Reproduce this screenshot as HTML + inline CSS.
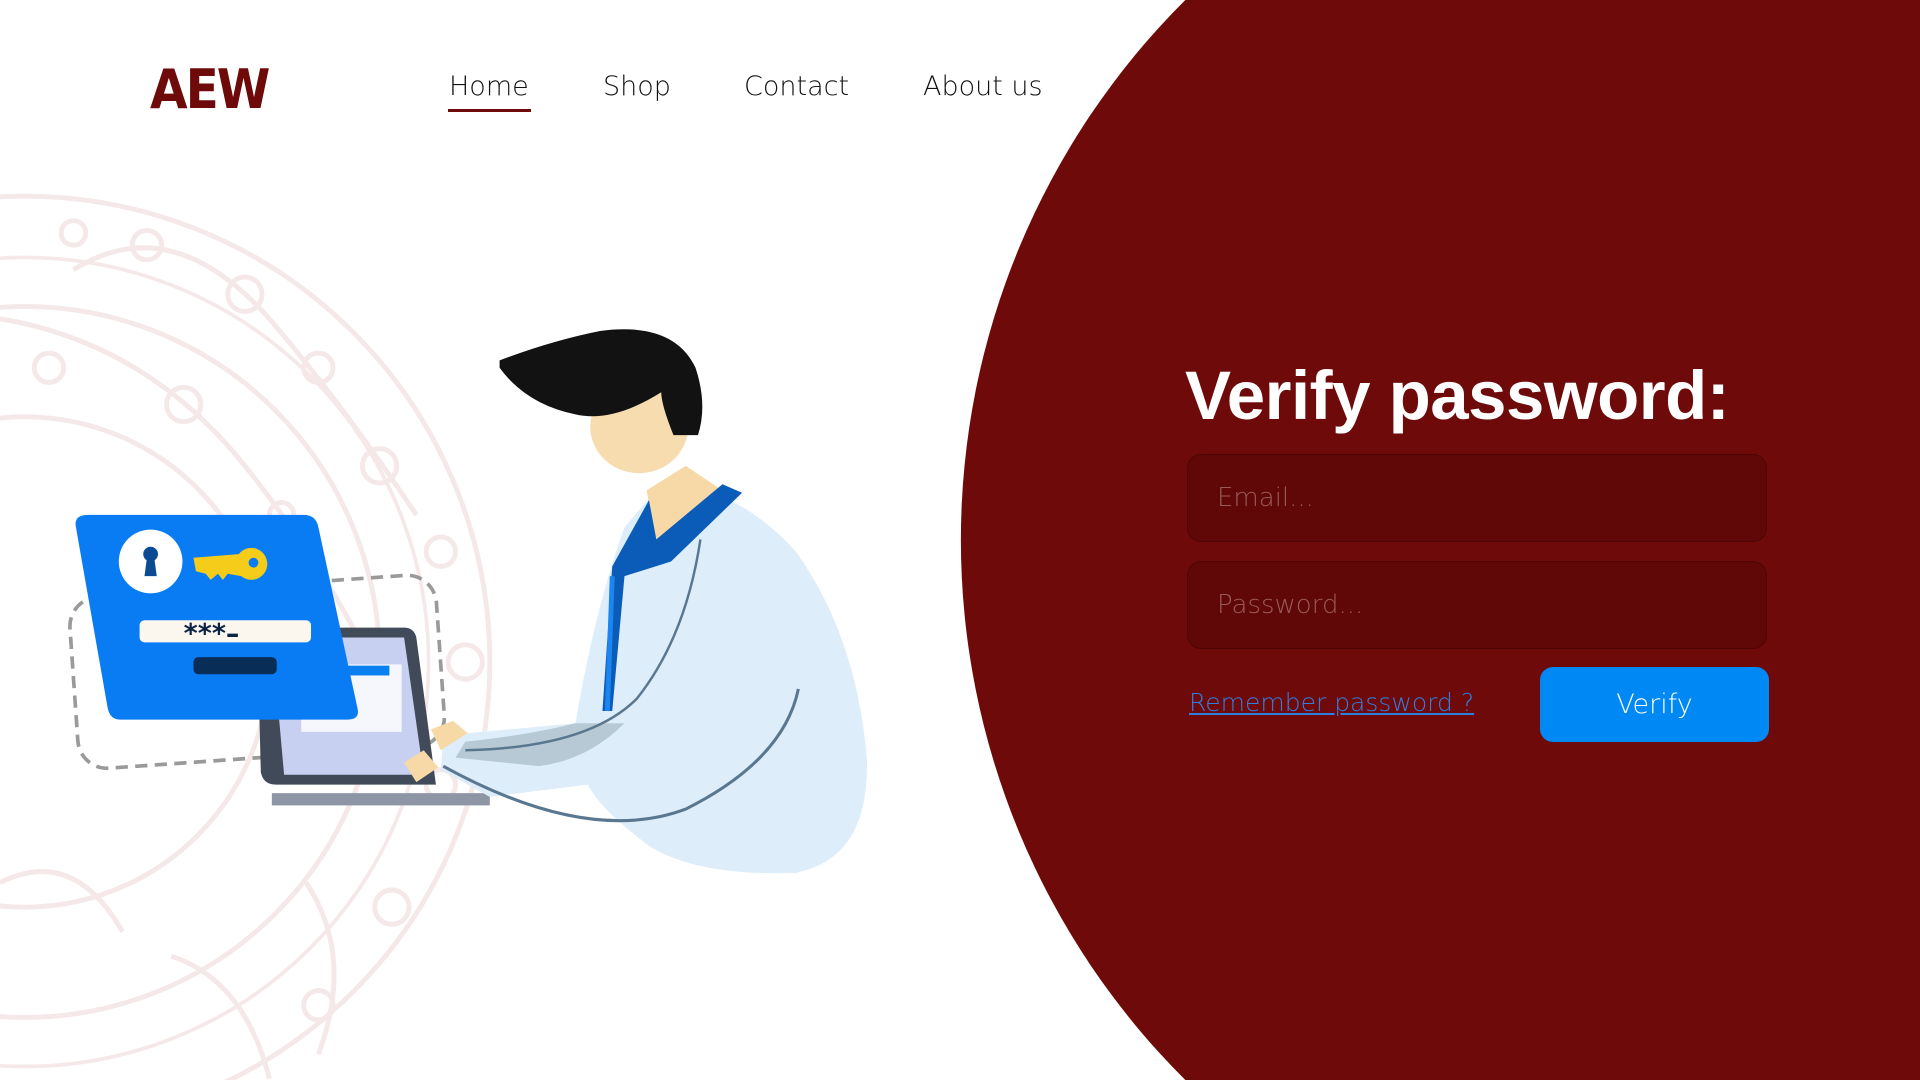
<!DOCTYPE html>
<html><head><meta charset="utf-8"><style>
html,body{margin:0;padding:0;width:1920px;height:1080px;overflow:hidden;background:#fff;font-family:"DejaVu Sans","Liberation Sans",sans-serif;}
svg.bg{position:absolute;left:0;top:0;width:1920px;height:1080px;}
.nav a{position:absolute;top:71px;font-size:27px;color:#111;text-decoration:none;font-weight:300;}
.logo{position:absolute;left:150px;top:58px;font-size:54px;font-weight:bold;color:#6e0a0a;font-family:"DejaVu Sans Condensed","DejaVu Sans",sans-serif;letter-spacing:-2px}
h1{position:absolute;left:1185px;top:356px;margin:0;font-size:69px;color:#fff;font-weight:bold;font-family:"Liberation Sans",sans-serif;letter-spacing:-0.5px}
.in{position:absolute;left:1187px;width:580px;height:88px;background:#600707;border:1px solid #4d0505;border-radius:14px;box-sizing:border-box;color:#9a5a5a;font-size:26px;line-height:86px;padding-left:29px;font-weight:300}
.link{position:absolute;left:1189px;top:688px;font-size:25px;color:#2d7fe0;text-decoration:underline;font-weight:300}
.btn{position:absolute;left:1540px;top:667px;width:229px;height:75px;background:#0088f5;border-radius:13px;color:#fff;font-size:27px;text-align:center;line-height:75px;font-weight:300}
</style></head><body>
<svg class="bg" viewBox="0 0 1568 881" preserveAspectRatio="none" xmlns="http://www.w3.org/2000/svg">
<g fill="none" stroke="#f5e8e8" stroke-width="4">
<circle cx="20" cy="540" r="380"/><circle cx="20" cy="540" r="290"/><circle cx="20" cy="540" r="200"/>
<circle cx="20" cy="540" r="330" stroke-width="3"/>
<circle cx="200" cy="240" r="14"/><circle cx="260" cy="300" r="12"/><circle cx="310" cy="380" r="14"/><circle cx="120" cy="200" r="12"/>
<circle cx="360" cy="450" r="12"/><circle cx="380" cy="540" r="14"/><circle cx="360" cy="640" r="12"/><circle cx="320" cy="740" r="14"/><circle cx="260" cy="820" r="12"/>
<circle cx="60" cy="190" r="10"/><circle cx="150" cy="330" r="14"/><circle cx="230" cy="420" r="10"/><circle cx="40" cy="300" r="12"/>
<path d="M60 220 q80 -50 160 40 q60 70 120 160"/><path d="M0 260 q120 20 200 120 q80 100 120 200"/>
<path d="M250 720 q40 60 10 140"/><path d="M140 780 q60 20 80 100"/><path d="M0 720 q60 -30 100 40"/>
</g>
<path d="M968 0 L1568 0 L1568 881 L968 881 A621 621 0 0 1 968 0 Z" fill="#6f0a0a"/>
<rect x="60" y="478" width="300" height="140" rx="24" fill="none" stroke="#9a9a9a" stroke-width="3" stroke-dasharray="10 6" transform="rotate(-4 210 548)"/>
<path d="M210 512 L330 512 Q338 512 340 520 L356 640 L225 640 Q215 640 213 630 Z" fill="#404a58"/>
<path d="M222 520 L330 520 L346 632 L232 632 Z" fill="#c7d0f0"/>
<rect x="246" y="542" width="82" height="55" fill="#f5f7fc"/>
<rect x="284" y="543" width="34" height="8" fill="#0a7ff0"/>
<rect x="222" y="647" width="178" height="10" fill="#8e96a6"/>
<path d="M72 420 L248 420 Q258 420 260 430 L292 578 Q294 587 284 587 L98 587 Q90 587 88 578 L62 430 Q60 420 72 420 Z" fill="#0a7cf3"/>
<circle cx="123" cy="458" r="26" fill="#fff"/>
<circle cx="123" cy="452" r="6" fill="#0b4b94"/><path d="M120 455 L126 455 L128 470 L118 470 Z" fill="#0b4b94"/>
<path d="M158 455 L195 452 A13 13 0 1 1 197 470 L186 468 L182 473 L178 468 L172 473 L168 468 L160 466 Z" fill="#f5cc1a"/>
<circle cx="207" cy="459" r="4" fill="#0a7cf3"/>
<rect x="114" y="506" width="140" height="18" rx="4" fill="#fbf7ee"/>
<text x="150" y="524" font-family="DejaVu Sans" font-weight="bold" font-size="22" fill="#0c2344">***–</text>
<rect x="158" y="536" width="68" height="14" rx="4" fill="#082d57"/>
<path d="M540 395 Q600 395 650 450 Q700 520 708 620 Q710 700 650 712 Q570 715 530 690 Q490 660 480 640 L400 650 L360 628 L362 600 L470 590 Q485 500 510 430 Z" fill="#deedfa"/>
<path d="M470 590 Q430 600 380 605 L372 618 L440 625 Q480 620 510 590 Z" fill="#b8c9d6"/>
<path d="M362 625 Q480 690 560 660 Q640 620 652 562" fill="none" stroke="#5a7790" stroke-width="2.5"/>
<path d="M380 612 Q480 610 520 570 Q560 520 572 440" fill="none" stroke="#5a7790" stroke-width="2"/>
<path d="M352 595 L370 588 L382 598 L360 612 Z" fill="#f7d9a8"/><path d="M330 622 L346 612 L358 626 L340 638 Z" fill="#f7d9a8"/>
<path d="M528 400 L560 380 L590 400 L540 460 Z" fill="#f7d9a8"/>
<path d="M590 395 L606 402 L548 458 L510 470 L500 580 L492 580 L500 462 L530 408 L536 440 Z" fill="#0a5cb8"/>
<path d="M500 470 L496 580" stroke="#1b86f0" stroke-width="4"/>
<ellipse cx="522" cy="348" rx="40" ry="38" fill="#f7dcaf"/>
<path d="M408 294 Q450 278 490 270 Q550 262 568 300 Q578 330 570 355 L550 355 Q540 330 540 320 Q500 345 470 338 Q430 330 408 300 Z" fill="#121212"/>
</svg>
<div class="logo">AEW</div>
<div class="nav">
<a style="left:449px">Home</a>
<a style="left:603px">Shop</a>
<a style="left:744px">Contact</a>
<a style="left:923px">About us</a>
</div>
<div style="position:absolute;left:448px;top:109px;width:83px;height:3px;background:#6e0a0a"></div>
<h1>Verify password:</h1>
<div class="in" style="top:454px">Email...</div>
<div class="in" style="top:561px">Password...</div>
<div class="link">Remember password ?</div>
<div class="btn">Verify</div>
</body></html>
